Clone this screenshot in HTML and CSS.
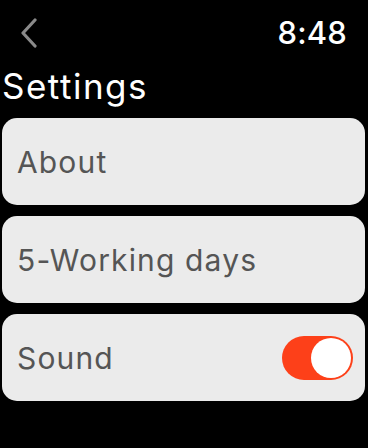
FILE: index.html
```html
<!DOCTYPE html>
<html lang="en">
<head>
    <meta charset="UTF-8">
    <meta name="viewport" content="width=device-width, initial-scale=1.0">
    <title>Settings</title>
    <link rel="stylesheet" href="styles.css">
</head>
<body>
<div class="screen">
    <div class="top-bar">
        <button class="back-button">
            <svg width="18" height="30" viewBox="0 0 18 30">
                <path d="M15 2 L3 15 L15 28" fill="none" stroke="#8a8a8a" stroke-width="3.2" stroke-linecap="round" stroke-linejoin="round"/>
            </svg>
        </button>
        <span class="clock">8:48</span>
    </div>
    <p class="title">Settings</p>
    <div class="list">
        <div class="row">About</div>
        <div class="row">5-Working days</div>
        <div class="row">
            Sound
            <div class="switch is-on"><div class="knob"></div></div>
        </div>
    </div>
</div>
</body>
</html>
```

FILE: styles.css
```css
body {
    margin: 0;
    background-color: black;
    font-family: Inter, "Noto Sans", sans-serif;
}

.screen {
    width: 368px;
    height: 448px;
}

.top-bar {
    display: flex;
    justify-content: space-between;
    align-items: center;
    height: 65px;
    padding: 0 21px 0 20px;
}

.back-button {
    background-color: transparent;
    border: none;
    padding: 0;
    display: flex;
}

.clock {
    color: white;
    font-size: 31px;
    font-weight: 500;
    letter-spacing: 0.2px;
}

.title {
    color: white;
    font-size: 35px;
    line-height: 42px;
    letter-spacing: 1.5px;
    margin: 0 0 11px 2px;
}

.list {
    display: flex;
    flex-direction: column;
    gap: 11px;
    padding: 0 3px 0 2px;
}

.row {
    display: flex;
    align-items: center;
    justify-content: space-between;
    height: 87px;
    padding: 0 12px 0 15px;
    background-color: #ebebeb;
    border-radius: 15px;
    color: #555555;
    font-size: 30px;
    letter-spacing: 1.15px;
}

.switch {
    width: 71px;
    height: 44px;
    border-radius: 22px;
    background-color: #fd4019;
    display: flex;
    align-items: center;
    justify-content: flex-end;
    padding: 0 2px;
    box-sizing: border-box;
}

.knob {
    width: 40px;
    height: 40px;
    border-radius: 50%;
    background-color: white;
}
```
